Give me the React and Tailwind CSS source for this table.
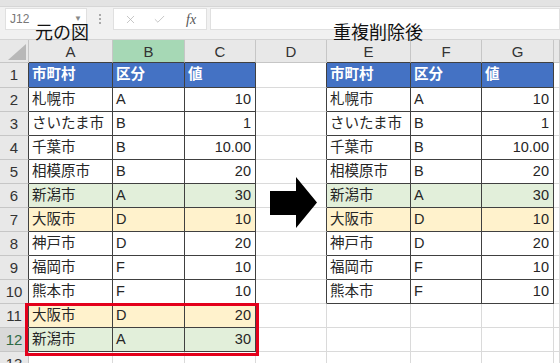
import React from 'react';
import { X, Check } from 'lucide-react';

const FONT = { fontFamily: '"Liberation Sans", "Noto Sans CJK JP", sans-serif' };

const LEFT = [
  ['札幌市', 'A', '10'],
  ['さいたま市', 'B', '1'],
  ['千葉市', 'B', '10.00'],
  ['相模原市', 'B', '20'],
  ['新潟市', 'A', '30'],
  ['大阪市', 'D', '10'],
  ['神戸市', 'D', '20'],
  ['福岡市', 'F', '10'],
  ['熊本市', 'F', '10'],
  ['大阪市', 'D', '20'],
  ['新潟市', 'A', '30'],
];
const RIGHT = LEFT.slice(0, 9);

const fillFor = (name) =>
  name === '新潟市' ? 'bg-[#e2efda]' : name === '大阪市' ? 'bg-[#fff2cc]' : 'bg-white';

const DARK = 'border-r-[#404040] border-b-[#404040]';
const GRID = 'border-r border-b border-[#dadada]';

function Cell({ children, className = '', align = 'left' }) {
  return (
    <div
      className={`${GRID} flex items-center text-[14.5px] text-[#262626] overflow-hidden whitespace-nowrap ${
        align === 'right' ? 'justify-end pr-[4px]' : 'pl-[3px]'
      } ${className}`}
    >
      {children}
    </div>
  );
}

function TableCells({ row, header }) {
  if (header) {
    return ['市町村', '区分', '値'].map((t) => (
      <Cell key={t} className={`${DARK} bg-[#4472c4] !text-white font-bold`}>
        {t}
      </Cell>
    ));
  }
  if (!row) {
    return [0, 1, 2].map((i) => <Cell key={i} />);
  }
  const f = fillFor(row[0]);
  return (
    <>
      <Cell className={`${DARK} ${f}`}>{row[0]}</Cell>
      <Cell className={`${DARK} ${f}`}>{row[1]}</Cell>
      <Cell className={`${DARK} ${f}`} align="right">
        {row[2]}
      </Cell>
    </>
  );
}

function Toolbar() {
  return (
    <div className="h-[40px] bg-[#f1f1f1] flex flex-col border-b border-[#d4d4d4]">
      <div className="h-[7px] bg-[#e3e3e3] border-b border-[#d6d6d6]" />
      <div className="h-[22px] mt-[1px] flex items-stretch">
        <div className="ml-[5px] w-[82px] bg-white border border-[#e0e0e0] flex items-center justify-between px-[4px]">
          <span className="text-[12px] text-[#777]">J12</span>
          <span className="text-[8px] text-[#888]">▼</span>
        </div>
        <div className="ml-[12px] flex flex-col justify-center gap-[2px]">
          <span className="w-[2px] h-[2px] bg-[#aaa]" />
          <span className="w-[2px] h-[2px] bg-[#aaa]" />
          <span className="w-[2px] h-[2px] bg-[#aaa]" />
        </div>
        <div className="ml-[12px] w-[94px] bg-white border border-[#e0e0e0] flex items-center pl-[10px] gap-[16px]">
          <X size={13} strokeWidth={1.4} color="#b5b5b5" />
          <Check size={13} strokeWidth={1.4} color="#b5b5b5" />
          <span className="ml-[4px] text-[14px] italic text-[#555]" style={{ fontFamily: '"Liberation Serif", serif' }}>
            fx
          </span>
        </div>
        <div className="ml-[3px] flex-1 bg-white border border-[#e0e0e0]" />
      </div>
    </div>
  );
}

export default function App() {
  const rows = [];
  for (let r = 1; r <= 13; r++) {
    const inLeft = r <= 12;
    const inRight = r <= 10;
    const h = r === 1 ? 'h-[25px]' : 'h-[24px]';
    const sel = r === 12;
    rows.push(
      <React.Fragment key={r}>
        <div
          className={`${h} border-r border-b border-[#c6c6c6] ${
            inLeft ? 'border-r-[#404040]' : ''
          } ${sel ? 'bg-[#d9d9d9] text-[#2e6b46]' : 'bg-[#e8e8e8] text-[#333]'} flex items-center justify-center pt-[1px] text-[15px]`}
        >
          {r}
        </div>
        <TableCells header={r === 1} row={inLeft && r > 1 ? LEFT[r - 2] : null} />
        <Cell className={inRight ? 'border-r-[#404040]' : ''} />
        <TableCells header={r === 1} row={inRight && r > 1 ? RIGHT[r - 2] : null} />
        <Cell />
      </React.Fragment>
    );
  }

  const colHeader = (label, extra = '') => (
    <div
      key={label}
      className={`h-[23px] border-r border-b border-[#c6c6c6] flex items-center justify-center pt-[2px] text-[15px] text-[#333] ${extra}`}
    >
      {label}
    </div>
  );

  return (
    <div className="relative w-[560px] h-[363px] overflow-hidden bg-white" style={FONT}>
      <Toolbar />
      <div className="grid grid-cols-[29px_84px_72px_71px_71px_84px_71px_72px_1fr]">
        <div className="h-[23px] bg-[#e8e8e8] border-r border-b border-[#c6c6c6] flex items-end justify-end p-[2px]">
          <svg width="18" height="16" viewBox="0 0 18 16">
            <polygon points="18,0 18,16 0,16" fill="#b8b8b8" />
          </svg>
        </div>
        {colHeader('A', 'bg-[#e8e8e8] border-b-[#404040]')}
        {colHeader('B', 'bg-[#a6d8b5] border-b-[#404040]')}
        {colHeader('C', 'bg-[#e8e8e8] border-b-[#404040]')}
        {colHeader('D', 'bg-[#e8e8e8]')}
        {colHeader('E', 'bg-[#e8e8e8] border-b-[#404040]')}
        {colHeader('F', 'bg-[#e8e8e8] border-b-[#404040]')}
        {colHeader('G', 'bg-[#e8e8e8] border-b-[#404040]')}
        {colHeader('', 'bg-[#e8e8e8]')}
        {rows}
      </div>

      {/* text boxes */}
      <div className="absolute left-[35px] top-[24px] text-[18px] leading-none text-[#111]">元の図</div>
      <div className="absolute left-[333px] top-[24px] text-[18px] leading-none text-[#111]">重複削除後</div>

      {/* arrow */}
      <svg className="absolute left-[270px] top-[177px]" width="48" height="52" viewBox="0 0 48 52">
        <polygon points="0,14 26,14 26,0 47,25.5 26,51 26,38 0,38" fill="#000" />
      </svg>

      {/* red frame */}
      <div className="absolute left-[25px] top-[303px] w-[234px] h-[53px] border-[3px] border-[#e3001b]" />
    </div>
  );
}
